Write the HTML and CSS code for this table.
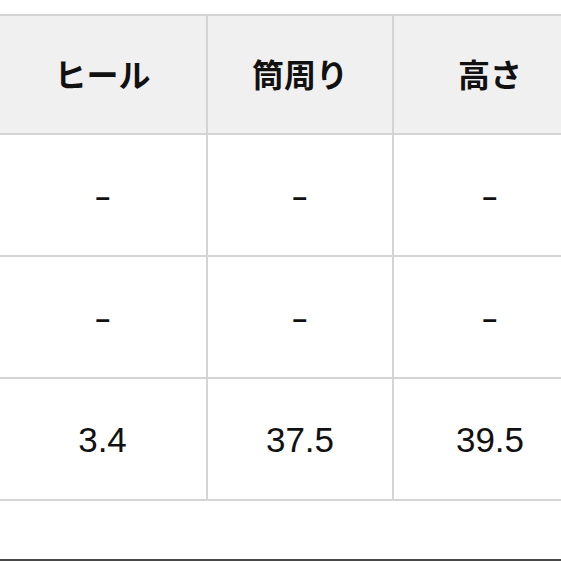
FILE: index.html
```html
<!DOCTYPE html>
<html lang="ja">
<head>
<meta charset="utf-8">
<title>サイズ表</title>
<link rel="stylesheet" href="styles.css">
</head>
<body>
<div class="page">
  <div class="size-table">
    <div class="cell head">ヒール</div>
    <div class="cell head">筒周り</div>
    <div class="cell head">高さ</div>
    <div class="cell"><span class="dash">-</span></div>
    <div class="cell"><span class="dash">-</span></div>
    <div class="cell"><span class="dash">-</span></div>
    <div class="cell"><span class="dash">-</span></div>
    <div class="cell"><span class="dash">-</span></div>
    <div class="cell"><span class="dash">-</span></div>
    <div class="cell">3.4</div>
    <div class="cell">37.5</div>
    <div class="cell">39.5</div>
  </div>
  <div class="spacer"></div>
  <div class="bottom-rule"></div>
</div>
</body>
</html>
```

FILE: styles.css
```css
html, body {
  margin: 0;
  padding: 0;
  background: #ffffff;
  overflow: hidden;
}

.page {
  width: 561px;
  height: 561px;
  display: flex;
  flex-direction: column;
  overflow: hidden;
}

.size-table {
  margin-top: 14px;
  margin-left: -1px;
  width: 587px;
  flex: none;
  display: grid;
  grid-template-columns: 207px 184px 192px;
  grid-template-rows: 117px 120px 120px 120px;
  gap: 2px;
  background: #d4d4d4;
  border-top: 2px solid #d4d4d4;
  border-bottom: 2px solid #d4d4d4;
  font-family: "Liberation Sans", "Noto Sans CJK JP", sans-serif;
  color: #111111;
}

.cell {
  background: #ffffff;
  display: flex;
  align-items: center;
  justify-content: center;
  font-size: 35px;
  line-height: 1;
}

.cell.head {
  background: #f0f0f0;
  font-weight: 700;
  font-size: 32px;
  padding-top: 2px;
}

.dash {
  display: inline-block;
  transform: scaleX(1.5);
}

.spacer {
  flex: 1;
}

.bottom-rule {
  height: 2px;
  background: #474747;
  flex: none;
}
```
